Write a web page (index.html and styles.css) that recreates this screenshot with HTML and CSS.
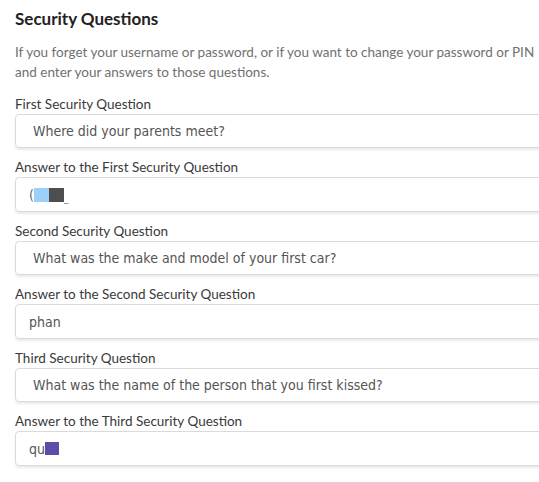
FILE: index.html
```
<!DOCTYPE html>
<html>
<head>
<meta charset="utf-8">
<link rel="stylesheet" href="styles.css">
</head>
<body>
<div class="page">
  <h1 class="title">Security Questions</h1>
  <p class="desc">If you forget your username or password, or if you want to change your password or PIN and enter your answers to those questions.</p>
  <div class="field">
    <div class="label">First Security Question</div>
    <div class="box select">Where did your parents meet?</div>
  </div>
  <div class="field">
    <div class="label">Answer to the First Security Question</div>
    <div class="box input"><span class="paren">(</span><span class="redact blue"></span><span class="redact dark"></span><span class="under">_</span></div>
  </div>
  <div class="field">
    <div class="label">Second Security Question</div>
    <div class="box select">What was the make and model of your first car?</div>
  </div>
  <div class="field">
    <div class="label">Answer to the Second Security Question</div>
    <div class="box input">phan</div>
  </div>
  <div class="field">
    <div class="label">Third Security Question</div>
    <div class="box select">What was the name of the person that you first kissed?</div>
  </div>
  <div class="field">
    <div class="label">Answer to the Third Security Question</div>
    <div class="box input">qu<span class="redact purple"></span></div>
  </div>
</div>
</body>
</html>
```
FILE: styles.css
```
html, body {
  margin: 0;
  padding: 0;
  background: #fff;
  overflow: hidden;
}
.page {
  width: 560px;
  padding: 7px 0 0 15px;
  font-family: Lato, "Liberation Sans", sans-serif;
}
.title {
  margin: 0;
  font-size: 17px;
  line-height: 24px;
  font-weight: 700;
  color: #222;
}
.desc {
  margin: 11px 0 13px;
  width: 530px;
  font-size: 13.5px;
  line-height: 20px;
  color: #707070;
}
.field {
  margin-bottom: 10px;
}
.label {
  font-size: 13.5px;
  line-height: 18px;
  color: #3a3a3a;
  margin-bottom: 1px;
}
.box {
  width: 560px;
  height: 32px;
  border: 1px solid #dadada;
  border-radius: 4px;
  box-shadow: 0 2px 2px rgba(0,0,0,0.08);
  display: flex;
  align-items: center;
  font-family: "DejaVu Sans Condensed", "DejaVu Sans", Verdana, sans-serif;
  font-size: 14px;
  color: #555;
  box-sizing: content-box;
}
.select {
  padding-left: 17px;
}
.input {
  padding-left: 13px;
  height: 33px;
}
.paren {
  color: #666;
}
.redact {
  display: inline-block;
  width: 15px;
  height: 14px;
}
.blue { background: #9dd0f8; }
.dark { background: #4e4e4e; }
.purple { background: #5a4fa8; width: 14px; height: 13px; }
.under {
  color: #888;
  font-size: 10px;
  position: relative;
  top: 3px;
}
```
